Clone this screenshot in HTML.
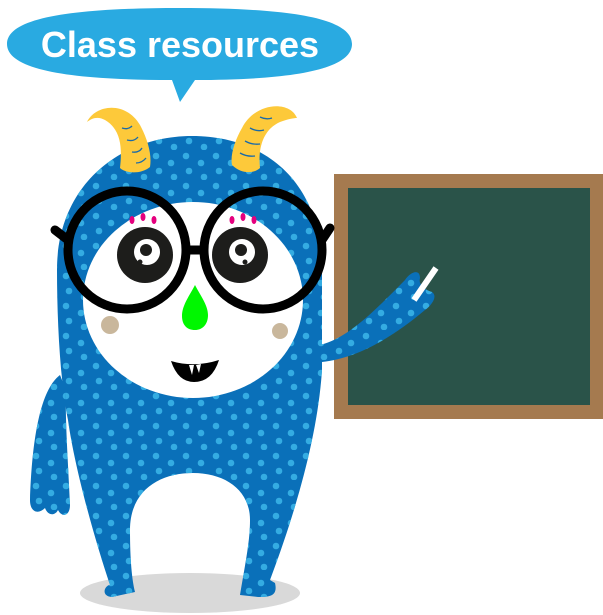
<!DOCTYPE html>
<html><head><meta charset="utf-8"><style>
html,body{margin:0;padding:0;background:#fff;width:603px;height:615px;overflow:hidden}
svg{display:block}
</style></head><body>
<svg width="603" height="615" viewBox="0 0 603 615" xmlns="http://www.w3.org/2000/svg">
<defs>
<pattern id="dots" width="30" height="30" patternUnits="userSpaceOnUse">
<circle cx="6" cy="6" r="3.3" fill="#34ace2"/>
<circle cx="21" cy="13" r="3.3" fill="#34ace2"/>
<circle cx="9" cy="21" r="3.3" fill="#34ace2"/>
<circle cx="24" cy="27" r="3.3" fill="#34ace2"/>
</pattern>
</defs>
<!-- bubble -->
<path d="M180 8 C290 8 352 18 352 44 C352 70 290 80 195 80 L180 102 L172 80 C70 80 7 70 7 44 C7 18 70 8 180 8 Z" fill="#29aae1"/>
<text x="180" y="57" text-anchor="middle" font-family="Liberation Sans, sans-serif" font-size="36" font-weight="bold" fill="#fff">Class resources</text>
<!-- chalkboard -->
<rect x="334" y="174" width="269" height="245" fill="#a57a4f"/>
<rect x="348" y="188" width="242" height="217" fill="#2a5349"/>
<!-- shadow -->
<ellipse cx="190" cy="593" rx="110" ry="20" fill="#d9d9d9"/>
<!-- body -->
<g>
<path id="b" d="M57 270 C57 185 120 136 192 136 C268 136 322 185 322 270 L322 370 C318 430 300 500 270 580 L275 583 C278 596 270 597 258 597 L240 595 C246 560 250 540 250 520 C250 490 225 473 193 473 C160 473 130 490 130 530 C130 560 132 580 135 592 L112 597 C100 596 105 585 110 585 C95 540 75 470 68 420 C60 380 57 320 57 270 Z" fill="#0a70b9"/>
<path d="M57 270 C57 185 120 136 192 136 C268 136 322 185 322 270 L322 370 C318 430 300 500 270 580 L275 583 C278 596 270 597 258 597 L240 595 C246 560 250 540 250 520 C250 490 225 473 193 473 C160 473 130 490 130 530 C130 560 132 580 135 592 L112 597 C100 596 105 585 110 585 C95 540 75 470 68 420 C60 380 57 320 57 270 Z" fill="url(#dots)"/>
<!-- left arm -->
<path d="M60 375 C40 390 32 440 30 500 C30 512 38 515 45 508 C48 516 55 516 58 510 C62 518 70 516 70 505 C68 460 65 420 66 390 Z" fill="#0a70b9"/>
<path d="M60 375 C40 390 32 440 30 500 C30 512 38 515 45 508 C48 516 55 516 58 510 C62 518 70 516 70 505 C68 460 65 420 66 390 Z" fill="url(#dots)"/>
<!-- right arm -->
<path d="M320 345 C350 338 380 305 405 280 C410 272 420 268 420 278 C418 285 425 290 432 292 C438 296 432 305 425 310 C395 335 360 358 322 362 Z" fill="#0a70b9"/>
<path d="M320 345 C350 338 380 305 405 280 C410 272 420 268 420 278 C418 285 425 290 432 292 C438 296 432 305 425 310 C395 335 360 358 322 362 Z" fill="url(#dots)"/>
<line x1="436" y1="268" x2="414" y2="300" stroke="#fff" stroke-width="6"/>
</g>
<!-- horns -->
<path d="M87 122 C95 105 125 100 140 125 C148 140 152 155 150 167 C140 175 125 173 120 168 C122 150 122 130 105 120 C98 116 92 118 87 122 Z" fill="#fdc93a"/>
<path d="M297 118 C290 100 255 102 242 128 C235 140 230 155 232 165 C242 175 255 173 260 168 C258 150 262 130 280 122 C288 119 294 118 297 118 Z" fill="#fdc93a"/>
<g stroke="#1a6aa8" stroke-width="1.3" fill="none">
<path d="M122 128 q6 2 10 -2"/><path d="M127 140 q7 2 11 -3"/><path d="M132 152 q7 1 10 -4"/><path d="M136 163 q6 0 10 -5"/>
<path d="M260 117 q6 3 12 1"/><path d="M250 128 q7 4 14 2"/><path d="M245 141 q7 4 15 3"/><path d="M240 153 q7 4 15 3"/>
</g>
<!-- face -->
<ellipse cx="193" cy="300" rx="110" ry="98" fill="#fff"/>
<!-- eyes -->
<circle cx="145" cy="255" r="28" fill="#1d1d1b"/>
<circle cx="147" cy="252" r="13" fill="#fff"/>
<circle cx="146" cy="250" r="6" fill="#1d1d1b"/>
<circle cx="140" cy="262" r="2.5" fill="#1d1d1b"/>
<circle cx="240" cy="255" r="28" fill="#1d1d1b"/>
<circle cx="242" cy="252" r="13" fill="#fff"/>
<circle cx="241" cy="250" r="6" fill="#1d1d1b"/>
<circle cx="245" cy="262" r="2.5" fill="#1d1d1b"/>
<g fill="#e5007e">
<ellipse cx="132" cy="220" rx="2.5" ry="4"/><ellipse cx="143" cy="217" rx="2.5" ry="4"/><ellipse cx="154" cy="220" rx="2.5" ry="4"/>
<ellipse cx="232" cy="220" rx="2.5" ry="4"/><ellipse cx="243" cy="217" rx="2.5" ry="4"/><ellipse cx="254" cy="220" rx="2.5" ry="4"/>
</g>
<!-- glasses -->
<g stroke="#000" stroke-width="9" fill="none" stroke-linecap="round">
<circle cx="127" cy="250" r="59"/>
<circle cx="263" cy="250" r="59"/>
<line x1="186" y1="250" x2="204" y2="250"/>
<line x1="55" y1="230" x2="68" y2="240"/>
<line x1="322" y1="240" x2="330" y2="228"/>
</g>
<!-- nose -->
<path d="M195 285 C200 295 208 305 208 315 C208 325 202 330 195 330 C187 330 182 325 182 316 C182 305 190 295 195 285 Z" fill="#00f700"/>
<!-- cheeks -->
<circle cx="110" cy="325" r="9" fill="#c9b79c"/>
<circle cx="280" cy="331" r="8" fill="#c9b79c"/>
<!-- mouth -->
<path d="M171 361 Q194 368 219 360 Q212 382 194 382 Q178 382 171 361 Z" fill="#000"/>
<path d="M189 365 L192 375 L194 365 Z M196 365 L199 373 L201 364 Z" fill="#fff"/>
</svg>
</body></html>
